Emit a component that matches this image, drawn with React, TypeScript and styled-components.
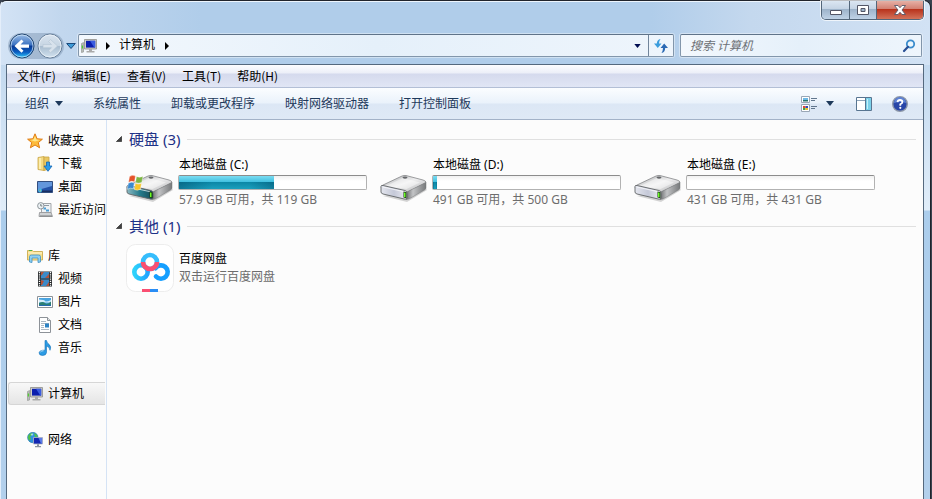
import React from "react";
import styled, { createGlobalStyle, css } from "styled-components";

const GlobalStyle = createGlobalStyle`
  *, *::before, *::after { box-sizing: border-box; }
  body {
    margin: 0;
    font-family: "Noto Sans", "Noto Sans CJK SC", sans-serif;
    font-size: 12px;
    line-height: 16px;
    color: #000;
  }
  button, input { font: inherit; color: inherit; }
  ul { list-style: none; margin: 0; padding: 0; }
`;

/* ---------- window frame ---------- */

const Desktop = styled.div`
  min-height: 100vh;
  display: flex;
  padding-right: 1px;
  background: #3a4350;
`;

const WindowFrame = styled.div`
  flex: 1;
  min-width: 0;
  display: flex;
  flex-direction: column;
  padding: 0 6px;
  border: 1px solid #20242c;
  border-left-color: #e4eefa;
  border-bottom: 0;
  border-radius: 6px 7px 0 0;
  background:
    linear-gradient(to right, #d3e3f5 0, #c2d7ee 60px, #b0cdea 200px, #b0cdea 650px, #c4d8ee 750px, #d2e2f4 100%) 0 0 / 100% 64px no-repeat,
    linear-gradient(to bottom, #c3d9ef 64px, #e0edf9 209px, #abcdec 210px, #b3d0ec 100%);
  box-shadow: inset 0 1px 0 #edf5fd;
`;

const TitleBar = styled.header`
  height: 31px;
  display: flex;
  justify-content: flex-end;
  align-items: flex-start;
`;

const WindowControls = styled.div`
  display: flex;
  height: 19px;
  border: 1px solid #53667a;
  border-top: 0;
  border-radius: 0 0 5px 5px;
  overflow: hidden;
  box-shadow: 0 0 0 1px rgba(255, 255, 255, 0.7);
`;

const ControlButton = styled.button<{ $close?: boolean }>`
  display: grid;
  place-items: center;
  width: ${({ $close }) => ($close ? "47px" : "27px")};
  padding: 0;
  border: 0;
  background: linear-gradient(#dbe6f2, #c4d3e4 45%, #9db3ca 46%, #bfd2e6);
  & + & { border-left: 1px solid #53667a; }
  ${({ $close }) =>
    $close &&
    css`
      background: linear-gradient(#e6b0a5, #d27e70 45%, #b8321c 46%, #d3735a);
    `}
`;

/* ---------- navigation row ---------- */

const NavRow = styled.div`
  display: flex;
  align-items: center;
  height: 27px;
  margin-bottom: 5px;
  padding: 0 2px 0 1px;
`;

const HistoryButtons = styled.div`
  display: flex;
  gap: 2px;
  padding: 0 1px;
  border-radius: 14px;
  background: rgba(120, 145, 172, 0.45);
`;

const RoundButton = styled.button`
  display: block;
  padding: 0;
  border: 0;
  background: none;
  svg { display: block; }
`;

const PlainButton = styled.button`
  display: flex;
  align-items: center;
  justify-content: center;
  padding: 0;
  border: 0;
  background: none;
`;

const HistoryMenu = styled(PlainButton)`
  width: 14px;
  height: 22px;
`;

const fieldBox = css`
  display: flex;
  align-items: center;
  height: 23px;
  border: 1px solid #8296ab;
  border-top-color: #5f7389;
  border-radius: 2px;
  background: linear-gradient(to right, #f3f8fd, #e5f0fa 50%, #eef5fc);
  box-shadow: 0 0 0 1px rgba(255, 255, 255, 0.4);
`;

const AddressBar = styled.div`
  ${fieldBox}
  flex: 1;
  min-width: 0;
  padding-left: 2px;
`;

const Crumb = styled(PlainButton)`
  height: 20px;
  padding: 0 10px 2px 9px;
`;

const CrumbArrow = styled(PlainButton)`
  width: 4px;
  height: 21px;
`;

const CrumbIcon = styled.span`
  display: flex;
  margin-right: 9px;
`;

const AddressMenu = styled(PlainButton)`
  width: 21px;
  height: 21px;
  margin-left: auto;
`;

const RefreshButton = styled(PlainButton)`
  width: 25px;
  height: 21px;
  border-left: 1px solid #71859b;
`;

const SearchBox = styled.form`
  ${fieldBox}
  flex: 0 1 242px;
  min-width: 0;
  margin-left: 6px;
  padding: 0 5px 0 9px;
`;

const SearchInput = styled.input`
  flex: 1;
  min-width: 0;
  padding: 0;
  border: 0;
  outline: 0;
  background: none;
  &::placeholder { color: #6d7176; font-style: italic; opacity: 1; }
`;

/* ---------- client area ---------- */

const Client = styled.div`
  flex: 1;
  display: flex;
  flex-direction: column;
  border: 1px solid #55697e;
  border-bottom: 0;
  background: #fcfcfc;
  margin-left: -1px;
`;

const MenuBar = styled.nav`
  display: flex;
  align-items: center;
  gap: 16px;
  height: 23px;
  padding: 0 10px;
  border-bottom: 1px solid #b3bfd6;
  background: linear-gradient(#fdfdff, #eceff8 8px, #d5daed 9px, #e1e6f5);
`;

const MenuItem = styled(PlainButton)`
  height: 22px;
  font-family: "Noto Sans CJK SC", sans-serif;
`;

const ToolBar = styled.div`
  display: flex;
  align-items: center;
  height: 32px;
  padding: 0 15px 0 18px;
  border-bottom: 1px solid #a3b2c8;
  background: linear-gradient(#fbfdff, #eaf2fb 15px, #dce7f5 16px, #dfe9f6);
`;

const ToolGroup = styled.div`
  display: flex;
  align-items: center;
  gap: 30px;
`;

const ToolButton = styled(PlainButton)`
  height: 24px;
  gap: 6px;
  color: #1e395b;
`;

const ToolIcons = styled.div`
  display: flex;
  align-items: center;
  gap: 20px;
  margin-left: auto;
`;

const ViewButton = styled(PlainButton)`
  gap: 8px;
  margin-right: 2px;
`;

const Body = styled.div`
  flex: 1;
  display: flex;
`;

/* ---------- sidebar ---------- */

const Sidebar = styled.nav`
  width: 100px;
  flex: none;
  display: flex;
  flex-direction: column;
  gap: 23px;
  padding: 9px 1px 0;
  border-right: 1px solid #d5e3f5;
`;

const TreeLink = styled.a<{ $child?: boolean; $selected?: boolean }>`
  display: flex;
  align-items: center;
  gap: 5px;
  height: 23px;
  padding-left: ${({ $child }) => ($child ? "28px" : "18px")};
  border: 1px solid transparent;
  border-right: 0;
  border-radius: 3px 0 0 3px;
  color: #000;
  text-decoration: none;
  white-space: nowrap;
  svg { flex: none; }
  ${({ $selected }) =>
    $selected &&
    css`
      border-color: #d6d6d6;
      background: linear-gradient(#f8f8f8, #e5e5e5);
    `}
`;

/* ---------- file list ---------- */

const Content = styled.main`
  flex: 1;
  min-width: 0;
  display: flex;
  flex-direction: column;
  gap: 8px;
  padding: 9px 7px 0 9px;
`;

const GroupHeader = styled.h2`
  display: flex;
  align-items: center;
  gap: 7px;
  height: 20px;
  margin: 0;
  font-size: 15px;
  font-weight: 400;
  line-height: 20px;
  color: #1e3287;
  &::after {
    content: "";
    flex: 1;
    height: 1px;
    background: #e0e0e0;
  }
`;

const ItemGrid = styled.ul`
  display: grid;
  grid-template-columns: repeat(auto-fill, 254px);
  padding: 8px 0 0 10px;
`;

const Item = styled.li`
  display: flex;
  gap: 5px;
`;

const DriveIconCell = styled.div`
  width: 48px;
  padding-top: 14px;
  svg { display: block; }
`;

const AppIconCell = styled.div`
  width: 48px;
  height: 48px;
`;

const ItemText = styled.div<{ $padded?: boolean }>`
  display: flex;
  flex-direction: column;
  gap: 2px;
  padding-top: ${({ $padded }) => ($padded ? "7px" : "0")};
`;

const ItemName = styled.span``;

const ItemDetail = styled.span`
  color: #6d6d6d;
`;

const CapacityBar = styled.div`
  width: 189px;
  height: 15px;
  margin-left: -1px;
  border: 1px solid #b2b2b2;
  border-top-color: #8c8c8c;
  border-radius: 2px;
  background: linear-gradient(#f1f1f1, #fff 5px);
`;

const CapacityFill = styled.div`
  height: 13px;
  background:
    linear-gradient(to right, rgba(0, 60, 90, 0.4), transparent 35%, transparent 75%, rgba(0, 60, 90, 0.35)) 0 6px no-repeat,
    linear-gradient(#7bdcf2, #3fbfdf 6px, #0a86a5 6px, #1b9fbd);
`;

/* ---------- icons ---------- */

const Triangle = ({ color = "#1e395b", width = 8, height = 5 }: { color?: string; width?: number; height?: number }) => (
  <svg width={width} height={height} viewBox="0 0 8 5" aria-hidden="true">
    <path d="M0 0h8L4 5z" fill={color} />
  </svg>
);

const RightTriangle = () => (
  <svg width="4" height="8" viewBox="0 0 4 8" aria-hidden="true">
    <path d="M0 0v8l4-4z" fill="#000" />
  </svg>
);

const ExpandMark = () => (
  <svg width="6" height="6" viewBox="0 0 7 7" aria-hidden="true">
    <path d="M6.500.5v6h-6z" fill="#404040" stroke="#262626" strokeWidth=".8" />
  </svg>
);

const BackIcon = () => (
  <svg width="26" height="26" viewBox="0 0 26 26" aria-hidden="true">
    <defs>
      <linearGradient id="back" x1="0" y1="0" x2="0" y2="1">
        <stop offset="0" stopColor="#9dbfe8" />
        <stop offset=".46" stopColor="#3a71c0" />
        <stop offset=".5" stopColor="#0a3a94" />
        <stop offset=".75" stopColor="#0a5cc0" />
        <stop offset="1" stopColor="#33d0ff" />
      </linearGradient>
    </defs>
    <circle cx="13" cy="13" r="12" fill="url(#back)" stroke="#22456f" strokeWidth="1" />
    <circle cx="13" cy="13" r="11" fill="none" stroke="#d5eafa" strokeOpacity=".7" strokeWidth="1" />
    <path d="M5.500 13l7-6.500 2 2-3 3H20v3.200h-8.500l3 3-2 2z" fill="#fff" />
  </svg>
);

const ForwardIcon = () => (
  <svg width="26" height="26" viewBox="0 0 26 26" aria-hidden="true">
    <defs>
      <linearGradient id="fwd" x1="0" y1="0" x2="0" y2="1">
        <stop offset="0" stopColor="#d9e4ef" />
        <stop offset=".48" stopColor="#c7d5e3" />
        <stop offset=".52" stopColor="#a9bdd0" />
        <stop offset="1" stopColor="#d3e3f0" />
      </linearGradient>
    </defs>
    <circle cx="13" cy="13" r="12" fill="url(#fwd)" stroke="#69809a" />
    <circle cx="13" cy="13" r="11" fill="none" stroke="#edf4fa" strokeOpacity=".8" />
    <path d="M20.500 13l-7-6.500-2 2 3 3H6v3.200h8.500l-3 3 2 2z" fill="#d8e2ec" stroke="#b4c4d3" strokeWidth=".6" />
  </svg>
);

const ComputerIcon = () => (
  <svg width="16" height="16" viewBox="0 0 16 16" aria-hidden="true">
    <path d="M.5 5.500l2-1v9.500l-2 .5z" fill="#b9bcb9" stroke="#8b8f8c" strokeWidth=".6" />
    <path d="M.8 7.500h1.200v3H.8z" fill="#4fd12f" />
    <path d="M3.500 1.500h12v9.500h-12z" fill="#cfcfc9" stroke="#8e8e8a" strokeWidth=".8" />
    <path d="M5 2.800h9.200v6.800H5z" fill="#0c1fae" />
    <path d="M9 2.800h5.200v6.800h-1z" fill="#3a5ce0" />
    <path d="M8 11h3v2h2.500v1.500h-8V13H8z" fill="#aaa" />
  </svg>
);

const StarIcon = () => (
  <svg width="16" height="16" viewBox="0 0 16 16" aria-hidden="true">
    <path d="M8 .8l2.100 5 5.300.4-4.100 3.400 1.300 5.200L8 12l-4.600 2.800 1.300-5.200L.6 6.200l5.300-.4z" fill="#fdbb3b" stroke="#e07c14" strokeLinejoin="round" />
    <path d="M8 3l1.300 3.600L13 7 8 8.500 3.500 7l3-.4z" fill="#ffe68a" />
  </svg>
);

const DownloadIcon = () => (
  <svg width="16" height="16" viewBox="0 0 16 16" aria-hidden="true">
    <path d="M1 1.500L7 .5v14l-6-1z" fill="#f4da83" stroke="#c9a544" strokeWidth=".8" />
    <path d="M7 1h5v12l-5 1.500z" fill="#e9c763" stroke="#c9a544" strokeWidth=".8" />
    <path d="M3 2v11" stroke="#fff3bd" strokeWidth="1.500" />
    <path d="M9.500 6h3v4H15l-4 5.300L7 10h2.500z" fill="#2a9bea" stroke="#1264b4" strokeWidth=".8" />
  </svg>
);

const DesktopIcon = () => (
  <svg width="16" height="16" viewBox="0 0 16 16" aria-hidden="true">
    <path d="M.5 2.500h15v11H.5z" fill="#2453a8" stroke="#324f80" />
    <path d="M1 3h14v4L1 11z" fill="#6397dc" />
    <path d="M1 11.500h14V13H1z" fill="#182f61" />
    <circle cx="3" cy="11.500" r="2" fill="#3fb8e8" />
    <path d="M2.200 10.700h.8v.8h-.8z" fill="#f06426" /><path d="M3.200 11.500h.8v.8h-.8z" fill="#f7d346" />
  </svg>
);

const RecentIcon = () => (
  <svg width="16" height="16" viewBox="0 0 16 16" aria-hidden="true">
    <path d="M4.500 1.500H14v9.500H4.500z" fill="#eef2f5" stroke="#a3a6a9" />
    <path d="M7 3.500h5" stroke="#8f9aa3" />
    <path d="M6.500 5.500h2.500v2H6.500zM9 7.500h3v2H9z" fill="#4a9ed6" />
    <path d="M2.500 10.500h11.500L15.500 14.500H2z" fill="#cfd2d4" stroke="#97999b" strokeWidth=".9" />
    <path d="M3 14h12" stroke="#7d8082" />
    <circle cx="3.800" cy="3.800" r="3.200" fill="#edf2f5" stroke="#90979c" />
    <path d="M3.800 2v2h1.500" fill="none" stroke="#566" strokeWidth=".8" />
  </svg>
);

const LibraryIcon = () => (
  <svg width="16" height="16" viewBox="0 0 16 16" aria-hidden="true">
    <path d="M.5 2.500h5l1 1h9V12H.5z" fill="#f7df8d" stroke="#ccab4f" strokeWidth=".9" />
    <path d="M2 2h3v1H2z" fill="#48b34b" />
    <path d="M1 5h14" stroke="#fff6cc" />
    <path d="M2.500 14V8.500Q2.500 7 4.500 7h7q2 0 2 1.500V14l-2.500.5V10H5v4.500z" fill="#8ed0f1" stroke="#3d8fc4" strokeWidth=".8" />
  </svg>
);

const VideoIcon = () => (
  <svg width="16" height="16" viewBox="0 0 16 16" aria-hidden="true">
    <path d="M1 .5h14v15H1z" fill="#292c2e" />
    <path d="M4 1h8v6.500H4zM4 8.500h8V15H4z" fill="#3b8ac8" />
    <path d="M4 1h3L5 4l-1 .5zM12 3v4H8zM4 9l3 1-2 4H4zM12 11v4H9z" fill="#b65139" />
    <path d="M2.500 1v14M13.500 1v14" stroke="#fff" strokeWidth="1.300" strokeDasharray="1.200 1" />
  </svg>
);

const PictureIcon = () => (
  <svg width="16" height="16" viewBox="0 0 16 16" aria-hidden="true">
    <path d="M.5 2.500h15v11H.5z" fill="#fff" stroke="#8d9298" />
    <path d="M2 4h12v8H2z" fill="#4aa4e0" />
    <path d="M2 5.500q5 0 6 1.500t6-1v2.500H2z" fill="#d6eefa" />
    <path d="M2 9q4-2 6 0t6-1.500V12H2z" fill="#2c7f74" />
    <path d="M2 11h12v1H2z" fill="#256aae" />
  </svg>
);

const DocumentIcon = () => (
  <svg width="16" height="16" viewBox="0 0 16 16" aria-hidden="true">
    <path d="M2.500.5h8l3 3v12h-11z" fill="#fff" stroke="#8d9298" />
    <path d="M10.500.5v3h3" fill="#e2e5e8" stroke="#8d9298" />
    <path d="M4 4.500h5M4 6.500h8M4 8.500h3M4 10.500h3M4 12.500h8" stroke="#a5b1bd" strokeWidth=".9" />
    <path d="M8 6.500h4v4H8z" fill="#2e83c4" />
  </svg>
);

const MusicIcon = () => (
  <svg width="16" height="16" viewBox="0 0 16 16" aria-hidden="true">
    <path d="M8 .5h1.500q.3 2.300 2.500 3.800 2.800 2.400 1 6-.2-3.300-3.500-4.300v6.500q-.3 3-4 3-3.600-.2-3.400-2.700.4-2.800 5.900-2.600z" fill="#2c9be3" stroke="#1672b8" strokeWidth=".6" />
    <path d="M3.500 12q1-1.500 3-1.200" stroke="#b6e3fb" fill="none" />
  </svg>
);

const NetworkIcon = () => (
  <svg width="16" height="16" viewBox="0 0 16 16" aria-hidden="true">
    <circle cx="5.800" cy="5.500" r="5.200" fill="#2f92dc" stroke="#2073aa" strokeWidth=".6" />
    <path d="M1 4q1.500-3 4.500-3.200L5 3 3 4.500 4 7 2.500 8.500Q.5 7 1 4zM7 1q3 .8 3.800 3.500L8 5z" fill="#4fc04a" />
    <path d="M3.500 2q2-1 3 0L5 4z" fill="#d2f5ff" opacity=".7" />
    <path d="M6.500 5.500h9V12h-9z" fill="#1226b4" stroke="#b5b9c4" strokeWidth=".8" />
    <path d="M11.500 6h3.600v5.600H14z" fill="#5a7be8" />
    <path d="M10 12.300h2v1.700h2v1.300H8V14h2z" fill="#8b93a0" />
  </svg>
);

const RefreshIcon = () => (
  <svg width="16" height="16" viewBox="0 0 16 16" aria-hidden="true">
    <path d="M7.500 1Q4 1.500 3.800 5.500H1L4.800 10l3.700-4.500H6Q6 3 7.500 1z" fill="#3c9ddd" />
    <path d="M8.500 15q3.500-.5 3.700-5H15L11.200 5.500 7.500 10H10q0 2.500-1.500 5z" fill="#2a69b4" />
  </svg>
);

const SearchIcon = () => (
  <svg width="14" height="14" viewBox="0 0 14 14" aria-hidden="true">
    <circle cx="8.500" cy="5" r="3.700" fill="#edf7fd" stroke="#3b8ccc" strokeWidth="1.800" />
    <path d="M6 7.800L2 12" stroke="#294f94" strokeWidth="2.200" strokeLinecap="round" />
  </svg>
);

const ViewIcon = () => (
  <svg width="17" height="16" viewBox="0 0 17 16" aria-hidden="true">
    <path d="M.5.500h8v6h-8zM.5 8.500h8v7h-8z" fill="#fff" stroke="#9aa7b6" />
    <path d="M2 2h5v3H2z" fill="#6cb8e4" /><path d="M2 4h5v1.500H2z" fill="#28746e" />
    <path d="M2 10h2.500v2H2z" fill="#e4452f" /><path d="M4.500 10H7v2H4.500z" fill="#334db4" />
    <path d="M2 12h2.500v2H2z" fill="#3fa747" /><path d="M4.500 12H7v2H4.500z" fill="#f0bd26" />
    <path d="M10 2.500h6M10 4.500h4M10 10.500h6M10 12.500h4" stroke="#61768d" />
  </svg>
);

const PaneIcon = () => (
  <svg width="16" height="14" viewBox="0 0 16 14" aria-hidden="true">
    <path d="M.5.500h15v13H.5z" fill="#fff" stroke="#587591" />
    <path d="M1 3.500h9" stroke="#8ea5bb" />
    <path d="M9.500 1v12" stroke="#587591" />
    <path d="M10 1h5v12h-5z" fill="#7cd1ea" />
    <path d="M11.500 2v10" stroke="#c5f0fa" />
  </svg>
);

const HelpIcon = () => (
  <svg width="16" height="16" viewBox="0 0 16 16" aria-hidden="true">
    <circle cx="8" cy="8" r="7.300" fill="#2846a8" stroke="#8d97a8" strokeWidth="1.400" />
    <path d="M2 7a6 6 0 0112 0q-6-2-12 0z" fill="#5f83d4" />
    <path d="M5.500 6.200Q5.700 4 8 4t2.400 2Q10.400 7.300 8.300 8.300V9.700" fill="none" stroke="#fff" strokeWidth="1.800" />
    <circle cx="8.300" cy="11.800" r="1.100" fill="#fff" />
  </svg>
);

const DriveIcon = ({ system, id }: { system?: boolean; id: string }) => (
  <svg width="48" height="32" viewBox="0 0 48 32" aria-hidden="true">
    <defs>
      <linearGradient id={`${id}-top`} x1="0" y1="0" x2="1" y2="1">
        <stop offset="0" stopColor="#a9abad" />
        <stop offset=".5" stopColor="#eeeeef" />
        <stop offset="1" stopColor="#b3b4b6" />
      </linearGradient>
      <linearGradient id={`${id}-front`} x1="0" y1="0" x2="1" y2="0">
        <stop offset="0" stopColor={system ? "#8cb9c2" : "#e4e6ee"} />
        <stop offset=".5" stopColor={system ? "#247b8b" : "#c5c9d8"} />
        <stop offset="1" stopColor={system ? "#164956" : "#ececf2"} />
      </linearGradient>
      <linearGradient id={`${id}-side`} x1="0" y1="0" x2="1" y2="0">
        <stop offset="0" stopColor="#6b6c6e" />
        <stop offset=".35" stopColor="#c2c3c5" />
        <stop offset="1" stopColor="#77797b" />
      </linearGradient>
    </defs>
    <path d="M3 25l24 6 20-12-3-4z" fill="#000" opacity=".16" />
    <path d="M1 16.500Q1 15 3 14L22 5q2-.8 4-.5l17 4.500q3 .8 3 2.500L28 21z" fill={`url(#${id}-top)`} stroke="#77797b" strokeWidth=".7" />
    <path d="M6 15L23 7l17 4.500L26.500 18z" fill="#fff" opacity=".45" />
    <path d="M46 11.500v5.500q0 1-1.500 2L29 28l-3 .6 1.500-8z" fill={`url(#${id}-side)`} stroke="#77797b" strokeWidth=".5" />
    <path d="M1 15.500q0-1.500 2-1l22 5q2 .5 2 2.500v4.500q0 2-2 1.700L3 23q-2-.6-2-2z" fill={`url(#${id}-front)`} stroke="#616467" strokeWidth=".9" />
    <path d="M3 16l21 4.700" stroke="#fff" strokeOpacity=".7" />
    <path d="M23.500 20.500l3 .7v6l-3-.7z" fill="#193b13" />
    <path d="M24 21.500l1.500.3v4.500l-1.500-.3z" fill="#6eff25" />
    <ellipse cx="25" cy="6.600" rx="2.500" ry="1.100" fill="#65676a" />
    {system && (
      <g stroke="#fff" strokeWidth=".4">
        <path d="M3.500 5.500q3-2 6-.5l-1 6q-3-1.500-6 .5z" fill="#e5532a" />
        <path d="M10.500 5.500q3 1.500 6.500-.2l-1.200 6q-3 1.700-6.300.2z" fill="#7db642" />
        <path d="M2.300 12.300q3-2 6-.5l-1 6q-3-1.500-6 .5z" fill="#3a89cf" />
        <path d="M9.300 12.300q3 1.500 6.300 0l-1.200 6q-3 1.700-6.100.2z" fill="#f8c52b" />
      </g>
    )}
  </svg>
);

const NetdiskIcon = () => (
  <svg width="48" height="48" viewBox="0 0 48 48" aria-hidden="true">
    <defs>
      <linearGradient id="nd-left" x1="0" y1="0" x2="1" y2="0">
        <stop offset="0" stopColor="#2fd3fb" />
        <stop offset="1" stopColor="#22a4ff" />
      </linearGradient>
    </defs>
    <rect x=".5" y=".5" width="47" height="47" rx="9" fill="#fff" stroke="#ededed" />
    <g fill="none" strokeWidth="4.600">
      <circle cx="15" cy="28" r="6.700" stroke="url(#nd-left)" />
      <path d="M29.500 24.200A6.700 6.700 0 1 1 30 32.500" stroke="#159fff" strokeLinecap="round" />
      <circle cx="24" cy="18" r="7" stroke="#36bdfc" />
      <path d="M17 18a7 7 0 0 0 14 0" stroke="#fa4f72" />
    </g>
    <path d="M16 45h8v3h-8z" fill="#fa4f72" />
    <path d="M24 45h8v3h-8z" fill="#298df5" />
  </svg>
);

/* ---------- data ---------- */

const menus = ["文件(F)", "编辑(E)", "查看(V)", "工具(T)", "帮助(H)"];
const tools = ["系统属性", "卸载或更改程序", "映射网络驱动器", "打开控制面板"];

type TreeNode = { label: string; icon: React.ReactNode; child?: boolean; selected?: boolean };

const tree: TreeNode[][] = [
  [
    { label: "收藏夹", icon: <StarIcon /> },
    { label: "下载", icon: <DownloadIcon />, child: true },
    { label: "桌面", icon: <DesktopIcon />, child: true },
    { label: "最近访问", icon: <RecentIcon />, child: true },
  ],
  [
    { label: "库", icon: <LibraryIcon /> },
    { label: "视频", icon: <VideoIcon />, child: true },
    { label: "图片", icon: <PictureIcon />, child: true },
    { label: "文档", icon: <DocumentIcon />, child: true },
    { label: "音乐", icon: <MusicIcon />, child: true },
  ],
  [{ label: "计算机", icon: <ComputerIcon />, selected: true }],
  [{ label: "网络", icon: <NetworkIcon /> }],
];

const drives = [
  { letter: "C", detail: "57.9 GB 可用，共 119 GB", used: 51, system: true },
  { letter: "D", detail: "491 GB 可用，共 500 GB", used: 2 },
  { letter: "E", detail: "431 GB 可用，共 431 GB", used: 0 },
];

export default function App() {
  return (
    <Desktop>
      <GlobalStyle />
      <WindowFrame>
        <TitleBar>
          <WindowControls>
            <ControlButton type="button" aria-label="最小化">
              <svg width="12" height="10" viewBox="0 0 12 10"><path d="M.5 5.500h11v4H.5z" fill="#fff" stroke="#535666" /></svg>
            </ControlButton>
            <ControlButton type="button" aria-label="最大化">
              <svg width="12" height="10" viewBox="0 0 12 10"><path d="M.5.500h11v9H.5zM4 3.500v3h4v-3z" fillRule="evenodd" fill="#fff" stroke="#535666" /></svg>
            </ControlButton>
            <ControlButton type="button" aria-label="关闭" $close>
              <svg width="12" height="10" viewBox="0 0 12 10"><path d="M.5.500h3.500L6 2.700 8 .5h3.500L8 5l3.500 4.500H8L6 7.300 4 9.500H.5L4 5z" fill="#fff" stroke="#535666" strokeWidth=".9" /></svg>
            </ControlButton>
          </WindowControls>
        </TitleBar>

        <NavRow>
          <HistoryButtons>
            <RoundButton type="button" aria-label="后退"><BackIcon /></RoundButton>
            <RoundButton type="button" aria-label="前进"><ForwardIcon /></RoundButton>
          </HistoryButtons>
          <HistoryMenu type="button" aria-label="历史记录">
            <svg width="10" height="6" viewBox="0 0 10 6"><path d="M.7.500h8.600L5 5.500z" fill="#3d9bd8" stroke="#1c4a7c" /></svg>
          </HistoryMenu>
          <AddressBar>
            <CrumbIcon><ComputerIcon /></CrumbIcon>
            <CrumbArrow type="button" aria-label="根目录"><RightTriangle /></CrumbArrow>
            <Crumb type="button">计算机</Crumb>
            <CrumbArrow type="button" aria-label="展开计算机"><RightTriangle /></CrumbArrow>
            <AddressMenu type="button" aria-label="以前的位置"><Triangle color="#000d52" width={7} height={4} /></AddressMenu>
            <RefreshButton type="button" aria-label="刷新"><RefreshIcon /></RefreshButton>
          </AddressBar>
          <SearchBox role="search" onSubmit={(e) => e.preventDefault()}>
            <SearchInput type="text" aria-label="搜索 计算机" placeholder="搜索 计算机" />
            <PlainButton type="submit" aria-label="搜索"><SearchIcon /></PlainButton>
          </SearchBox>
        </NavRow>

        <Client>
          <MenuBar>
            {menus.map((label) => (
              <MenuItem key={label} type="button">{label}</MenuItem>
            ))}
          </MenuBar>
          <ToolBar>
            <ToolGroup>
              <ToolButton type="button">组织 <Triangle /></ToolButton>
              {tools.map((label) => (
                <ToolButton key={label} type="button">{label}</ToolButton>
              ))}
            </ToolGroup>
            <ToolIcons>
              <ViewButton type="button" aria-label="更改视图"><ViewIcon /><Triangle /></ViewButton>
              <PlainButton type="button" aria-label="显示预览窗格"><PaneIcon /></PlainButton>
              <PlainButton type="button" aria-label="帮助"><HelpIcon /></PlainButton>
            </ToolIcons>
          </ToolBar>
          <Body>
            <Sidebar aria-label="导航窗格">
              {tree.map((group) => (
                <ul key={group[0].label}>
                  {group.map(({ label, icon, child, selected }) => (
                    <li key={label}>
                      <TreeLink href="#" $child={child} $selected={selected}>{icon}{label}</TreeLink>
                    </li>
                  ))}
                </ul>
              ))}
            </Sidebar>
            <Content>
              <section>
                <GroupHeader><ExpandMark />硬盘 (3)</GroupHeader>
                <ItemGrid>
                  {drives.map(({ letter, detail, used, system }) => (
                    <Item key={letter}>
                      <DriveIconCell><DriveIcon id={`drive-${letter}`} system={system} /></DriveIconCell>
                      <ItemText>
                        <ItemName>本地磁盘 ({letter}:)</ItemName>
                        <CapacityBar role="meter" aria-label={`本地磁盘 ${letter} 已用空间`} aria-valuemin={0} aria-valuemax={100} aria-valuenow={used}>
                          <CapacityFill style={{ width: `${used}%` }} />
                        </CapacityBar>
                        <ItemDetail>{detail}</ItemDetail>
                      </ItemText>
                    </Item>
                  ))}
                </ItemGrid>
              </section>
              <section>
                <GroupHeader><ExpandMark />其他 (1)</GroupHeader>
                <ItemGrid>
                  <Item>
                    <AppIconCell><NetdiskIcon /></AppIconCell>
                    <ItemText $padded>
                      <ItemName>百度网盘</ItemName>
                      <ItemDetail>双击运行百度网盘</ItemDetail>
                    </ItemText>
                  </Item>
                </ItemGrid>
              </section>
            </Content>
          </Body>
        </Client>
      </WindowFrame>
    </Desktop>
  );
}
